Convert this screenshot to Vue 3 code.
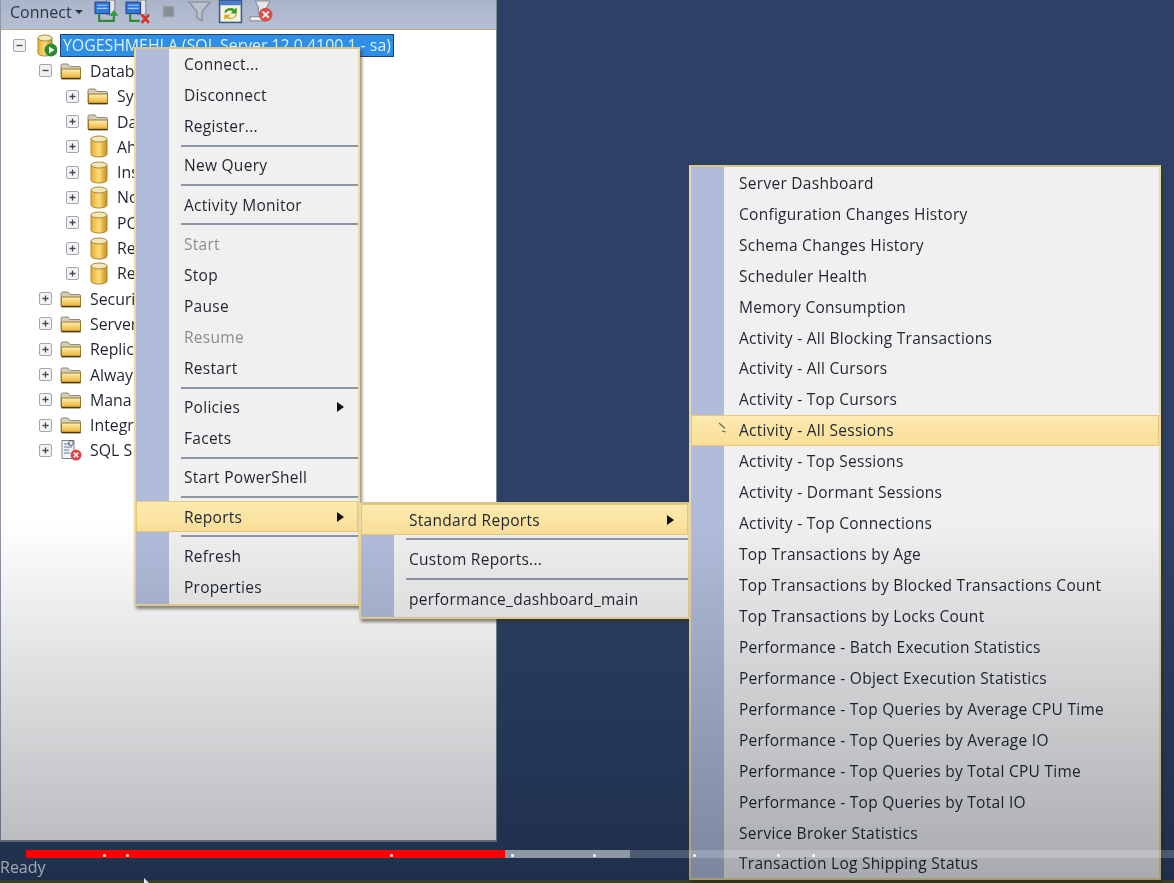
<script setup>
const treeRows = [
  { level: 0, box: 'minus', icon: 'server', text: 'YOGESHMEHLA (SQL Server 12.0.4100.1 - sa)', selected: true },
  { level: 1, box: 'minus', icon: 'folder', text: 'Datab' },
  { level: 2, box: 'plus', icon: 'folder', text: 'Sy' },
  { level: 2, box: 'plus', icon: 'folder', text: 'Da' },
  { level: 2, box: 'plus', icon: 'db', text: 'Ah' },
  { level: 2, box: 'plus', icon: 'db', text: 'Ins' },
  { level: 2, box: 'plus', icon: 'db', text: 'No' },
  { level: 2, box: 'plus', icon: 'db', text: 'PC' },
  { level: 2, box: 'plus', icon: 'db', text: 'Re' },
  { level: 2, box: 'plus', icon: 'db', text: 'Re' },
  { level: 1, box: 'plus', icon: 'folder', text: 'Securi' },
  { level: 1, box: 'plus', icon: 'folder', text: 'Server' },
  { level: 1, box: 'plus', icon: 'folder', text: 'Replic' },
  { level: 1, box: 'plus', icon: 'folder', text: 'Alway' },
  { level: 1, box: 'plus', icon: 'folder', text: 'Mana' },
  { level: 1, box: 'plus', icon: 'folder', text: 'Integr' },
  { level: 1, box: 'plus', icon: 'agent', text: 'SQL S' }
]

const mainMenu = [
  { t: 'Connect...' }, { t: 'Disconnect' }, { t: 'Register...' }, { sep: true },
  { t: 'New Query' }, { sep: true },
  { t: 'Activity Monitor' }, { sep: true },
  { t: 'Start', off: true }, { t: 'Stop' }, { t: 'Pause' }, { t: 'Resume', off: true }, { t: 'Restart' }, { sep: true },
  { t: 'Policies', arrow: true }, { t: 'Facets' }, { sep: true },
  { t: 'Start PowerShell' }, { sep: true },
  { t: 'Reports', arrow: true, hl: true }, { sep: true },
  { t: 'Refresh' }, { t: 'Properties' }
]

const subMenu = [
  { t: 'Standard Reports', arrow: true, hl: true }, { sep: true },
  { t: 'Custom Reports...' }, { sep: true },
  { t: 'performance_dashboard_main' }
]

const reports = [
  'Server Dashboard', 'Configuration Changes History', 'Schema Changes History', 'Scheduler Health',
  'Memory Consumption', 'Activity - All Blocking Transactions', 'Activity - All Cursors', 'Activity - Top Cursors',
  'Activity - All Sessions', 'Activity - Top Sessions', 'Activity - Dormant Sessions', 'Activity - Top Connections',
  'Top Transactions by Age', 'Top Transactions by Blocked Transactions Count', 'Top Transactions by Locks Count',
  'Performance - Batch Execution Statistics', 'Performance - Object Execution Statistics',
  'Performance - Top Queries by Average CPU Time', 'Performance - Top Queries by Average IO',
  'Performance - Top Queries by Total CPU Time', 'Performance - Top Queries by Total IO',
  'Service Broker Statistics', 'Transaction Log Shipping Status'
]
const ticks = [104, 127, 391, 512, 594, 694, 778, 813]
</script>

<template>
  <div class="screen">
    <svg class="defs" width="0" height="0">
      <defs>
        <linearGradient id="gold" x1="0" x2="1" y1="0" y2="0">
          <stop offset="0" stop-color="#e8ad2c" />
          <stop offset="0.5" stop-color="#fbdc7c" />
          <stop offset="1" stop-color="#cb8c18" />
        </linearGradient>
        <linearGradient id="fold" x1="0" x2="0" y1="0" y2="1">
          <stop offset="0" stop-color="#fff0b4" />
          <stop offset="1" stop-color="#ecae2c" />
        </linearGradient>
        <symbol id="i-folder" viewBox="0 0 22 18">
          <path d="M1 3.5 Q1 2 2.5 2 H8 L10 4.5 H19 Q20.5 4.5 20.5 6 V16 H1 Z" fill="#d4ceb8" stroke="#8f8a70" />
          <path d="M1.5 7 H20.5 V16.5 H1.5 Z" fill="url(#fold)" stroke="#9a7a2a" />
          <path d="M1.5 16.6 H20.5" stroke="#4b3c18" stroke-width="1.6" />
        </symbol>
        <symbol id="i-db" viewBox="0 0 18 23">
          <path d="M1 4 V19 C1 23 17 23 17 19 V4 Z" fill="url(#gold)" stroke="#a98a3a" />
          <ellipse cx="9" cy="4" rx="8" ry="3" fill="#f3e6b8" stroke="#a98a3a" />
        </symbol>
        <symbol id="i-box-plus" viewBox="0 0 13 13">
          <rect x="0.5" y="0.5" width="12" height="12" rx="1.5" fill="#f3f3f5" stroke="#a4a6ac" />
          <path d="M3.5 6.5 H9.5 M6.5 3.5 V9.5" stroke="#404858" stroke-width="1.3" />
        </symbol>
        <symbol id="i-box-minus" viewBox="0 0 13 13">
          <rect x="0.5" y="0.5" width="12" height="12" rx="1.5" fill="#f0f0f2" stroke="#a4a6ac" />
          <path d="M3.5 6.5 H9.5" stroke="#404858" stroke-width="1.3" />
        </symbol>
      </defs>
    </svg>

    <div class="workspace">
      <aside class="explorer">
        <div class="toolbar">
          <span class="connect">Connect</span>
          <span class="caret"></span>
          <div class="tools">
            <svg class="tool" viewBox="0 0 24 24">
              <rect x="12" y="1" width="8" height="14" fill="#e4e6ea" stroke="#7d8490" />
              <rect x="1" y="3" width="14" height="11" fill="#2f78e0" stroke="#26407c" />
              <path d="M3 6 H13 M3 9 H13" stroke="#a8ccf6" />
              <path d="M5 14 V21 H19 V15" fill="none" stroke="#2f8a36" stroke-width="2" />
              <path d="M14.5 16 L19 10.5 L23.5 16 Z" fill="#2f9a3a" />
            </svg>
            <svg class="tool" viewBox="0 0 24 24">
              <rect x="12" y="1" width="8" height="14" fill="#e4e6ea" stroke="#7d8490" />
              <rect x="1" y="3" width="14" height="11" fill="#2f78e0" stroke="#26407c" />
              <path d="M3 6 H13 M3 9 H13" stroke="#a8ccf6" />
              <path d="M5 14 V21 H14" fill="none" stroke="#2f8a36" stroke-width="2" />
              <path d="M16 15 L23 23 M23 15 L16 23" stroke="#d8302c" stroke-width="2.6" />
            </svg>
            <svg class="tool" viewBox="0 0 24 24">
              <rect x="7" y="7" width="10" height="10" fill="#878d97" stroke="#9aa0aa" />
            </svg>
            <svg class="tool" viewBox="0 0 24 24">
              <path d="M2 3 H22 L14.5 12 V21 L9.5 18 V12 Z" fill="#bcc3cf" stroke="#8e949e" stroke-width="1.4" />
            </svg>
            <svg class="tool" viewBox="0 0 24 24">
              <rect x="1.5" y="1.5" width="21" height="21" fill="#f4f2dc" stroke="#3c5c94" stroke-width="1.5" />
              <rect x="2" y="2" width="20" height="4" fill="#4a7cc8" />
              <path d="M6 13 A6 5 0 0 1 16 10 L18 8 V14 H12 L14 12 A3.5 3 0 0 0 8 13 Z" fill="#3c9a2c" />
              <path d="M18 14 A6 5 0 0 1 8 18 L6 20 V15 H12 L10 17 A3.5 3 0 0 0 16 14 Z" fill="#e0a820" />
            </svg>
            <svg class="tool" viewBox="0 0 24 24">
              <path d="M6 2 H20 L17 8 V14 H9 V8 Z" fill="#e8e8ec" stroke="#868a94" />
              <rect x="1" y="17" width="15" height="4" fill="#f0f0f4" stroke="#868a94" />
              <circle cx="16" cy="15" r="6.5" fill="#d84c48" />
              <path d="M13 12 L19 18 M19 12 L13 18" stroke="#f8e4e0" stroke-width="2" />
            </svg>
          </div>
        </div>
        <div class="tree">
          <div v-for="(row, i) in treeRows" :key="i" class="row" :class="'level-' + row.level">
            <svg class="box"><use :href="'#i-box-' + row.box" /></svg>
            <svg v-if="row.icon === 'folder'" class="ico-folder"><use href="#i-folder" /></svg>
            <svg v-else-if="row.icon === 'db'" class="ico-db"><use href="#i-db" /></svg>
            <svg v-else-if="row.icon === 'server'" class="ico-server" viewBox="0 0 20 23">
              <path d="M1 4 V19 C1 23 15 23 15 19 V4 Z" fill="url(#gold)" stroke="#a98a3a" />
              <ellipse cx="8" cy="4" rx="7" ry="3" fill="#f3e6b8" stroke="#a98a3a" />
              <circle cx="14" cy="16" r="6.5" fill="#2b8a2e" />
              <path d="M12 12.5 L17.5 16 L12 19.5 Z" fill="#f4f8ee" />
            </svg>
            <svg v-else class="ico-agent" viewBox="0 0 22 22">
              <rect x="2" y="1.5" width="12" height="18" fill="#f2f2f6" stroke="#7d8490" />
              <path d="M4 5 H10 M4 8 H12 M4 11 H9 M4 14 H10" stroke="#5a78a8" />
              <circle cx="11" cy="4" r="2.4" fill="none" stroke="#555" />
              <circle cx="16" cy="16" r="5.5" fill="#dc4644" />
              <path d="M13.8 13.8 L18.2 18.2 M18.2 13.8 L13.8 18.2" stroke="#fff" stroke-width="1.6" />
            </svg>
            <span class="label" :class="{ selected: row.selected }">{{ row.text }}</span>
          </div>
        </div>
      </aside>
    </div>
    <footer class="status"><span>Ready</span></footer>

    <div class="menu menu-main">
      <template v-for="(m, i) in mainMenu" :key="i">
        <div v-if="m.sep" class="sep"></div>
        <div v-else class="item" :class="{ off: m.off, hl: m.hl }">
          <span>{{ m.t }}</span><i v-if="m.arrow" class="arrow"></i>
        </div>
      </template>
    </div>

    <div class="menu menu-sub">
      <template v-for="(m, i) in subMenu" :key="i">
        <div v-if="m.sep" class="sep"></div>
        <div v-else class="item" :class="{ hl: m.hl }">
          <span>{{ m.t }}</span><i v-if="m.arrow" class="arrow"></i>
        </div>
      </template>
    </div>

    <div class="menu menu-reports">
      <div v-for="r in reports" :key="r" class="item" :class="{ hl: r === 'Activity - All Sessions' }">
        <svg v-if="r === 'Activity - All Sessions'" class="pointer" viewBox="0 0 10 12">
          <path d="M1 1 L7 6.5 M4 9 L8 10" stroke="#6a6a5a" stroke-width="1.2" fill="none" />
        </svg>
        <span>{{ r }}</span>
      </div>
    </div>

    <div class="video-fade"></div>
    <div class="progress">
      <div class="played"></div>
      <div class="buffered"></div>
      <div class="rest"></div>
      <b v-for="x in ticks" :key="x" class="tick" :style="{ left: x + 'px' }"></b>
    </div>
    <svg class="mouse" viewBox="0 0 8 8"><path d="M1 0 V8 L6 5 Z" fill="#e8e8e8" /></svg>
  </div>
</template>

<style>
html, body { margin: 0; background: #1c2840; }
</style>

<style scoped>
.screen {
  position: relative;
  width: 1174px;
  height: 883px;
  overflow: hidden;
  display: flex;
  flex-direction: column;
  background: #2c4165;
  font-family: "Open Sans", "Noto Sans", sans-serif;
  font-size: 15px;
  color: #1f2430;
  filter: blur(0.45px);
}
.defs { position: absolute; }
.workspace { flex: 1; display: flex; min-height: 0; }
.explorer {
  width: 497px;
  box-sizing: border-box;
  display: flex;
  flex-direction: column;
  border-left: 1px solid #8d97a8;
  border-right: 1px solid #7d8898;
  border-bottom: 2px solid #7d8898;
  background: #fff;
}
.toolbar {
  height: 30px;
  display: flex;
  align-items: center;
  padding: 0 0 6px 9px;
  box-sizing: border-box;
  background: linear-gradient(#aab4c9, #b7c0d3);
  border-bottom: 1px solid #c9a888;
  font-size: 16px;
  color: #2d3646;
}
.connect { width: 65px; }
.caret {
  width: 0;
  height: 0;
  border: 4px solid transparent;
  border-top-color: #2b303c;
  border-bottom: 0;
}
.tools { display: flex; gap: 6px; margin-left: 11px; }
.tool { width: 25px; height: 25px; }
.tree { flex: 1; padding-top: 3px; background: #fff; }
.row { height: 25.3px; display: flex; align-items: center; white-space: nowrap; font-size: 15.85px; }
.level-0 { padding-left: 12px; }
.level-1 { padding-left: 38px; }
.level-2 { padding-left: 65px; }
.box { width: 13px; height: 13px; flex: none; margin-right: 8px; }
.ico-folder { width: 22px; height: 18px; flex: none; margin-right: 8px; }
.ico-db { width: 18px; height: 23px; flex: none; margin: 0 9px 0 3px; }
.ico-server { width: 20px; height: 23px; flex: none; margin: 0 4px 0 3px; }
.ico-agent { width: 22px; height: 22px; flex: none; margin-right: 8px; }
.label.selected {
  padding: 0 2px;
  line-height: 21px;
  background: #2f8fe6;
  color: #dcefff;
  outline: 1px solid #23406a;
}
.status {
  height: 41px;
  display: flex;
  align-items: center;
  box-sizing: border-box;
  border-bottom: 3px solid #55552c;
  padding-top: 11px;
  font-size: 16px;
  color: #e4e9f0;
}
.menu {
  position: absolute;
  box-sizing: border-box;
  border: 2px solid #ecd9a0;
  border-top-color: #d9c588;
  background: linear-gradient(to right, #b0bcd9 33px, #f0f0f0 33px);
  background-clip: padding-box;
  box-shadow: 2px 3px 3px rgba(60, 50, 20, 0.55);
  font-size: 15.5px;
  letter-spacing: 0.28px;
}
.menu-main { left: 134px; top: 47px; width: 226px; height: 559px; }
.menu-main .item:first-child { margin-top: -0.5px; }
.menu-sub { left: 359px; top: 502px; width: 331px; height: 117px; }
.menu-sub .sep { height: 8.6px; }
.menu-reports { left: 689px; top: 165px; width: 472px; height: 715px; }
.item {
  position: relative;
  height: 31px;
  display: flex;
  align-items: center;
  box-sizing: border-box;
  padding: 0 14px 0 48px;
  white-space: nowrap;
}
.menu-reports .item { height: 30.95px; }
.menu-reports .item:first-child { margin-top: 0.4px; }
.item.hl {
  background: linear-gradient(#fdeab0, #f9df98);
  box-shadow: inset 0 0 0 1px #e8c878;
}
.item.off { color: #8c8c8c; }
.arrow {
  margin-left: auto;
  width: 0;
  height: 0;
  border: 5px solid transparent;
  border-left: 7px solid #111;
  border-right: 0;
}
.pointer { position: absolute; left: 27px; top: 7px; width: 10px; height: 12px; }
.sep { height: 8.3px; margin-left: 45px; display: flex; align-items: center; }
.sep::before { content: ""; flex: 1; height: 2px; background: #8d96a7; }
.video-fade {
  position: absolute;
  left: 0;
  right: 0;
  top: 520px;
  bottom: 0;
  pointer-events: none;
  background: linear-gradient(rgba(0, 8, 20, 0), rgba(0, 8, 20, 0.3));
}
.progress {
  position: absolute;
  left: 26px;
  right: 0;
  top: 850px;
  height: 8px;
  display: flex;
}
.played { width: 479px; background: #ff0000; }
.buffered { width: 125px; background: #8f97a3; }
.rest { flex: 1; background: rgba(255, 255, 255, 0.2); }
.tick {
  position: absolute;
  top: 4px;
  width: 3px;
  height: 3px;
  margin-left: -27px;
  border-radius: 50%;
  background: #fff;
}
.mouse { position: absolute; left: 143px; top: 878px; width: 8px; height: 8px; }
</style>
